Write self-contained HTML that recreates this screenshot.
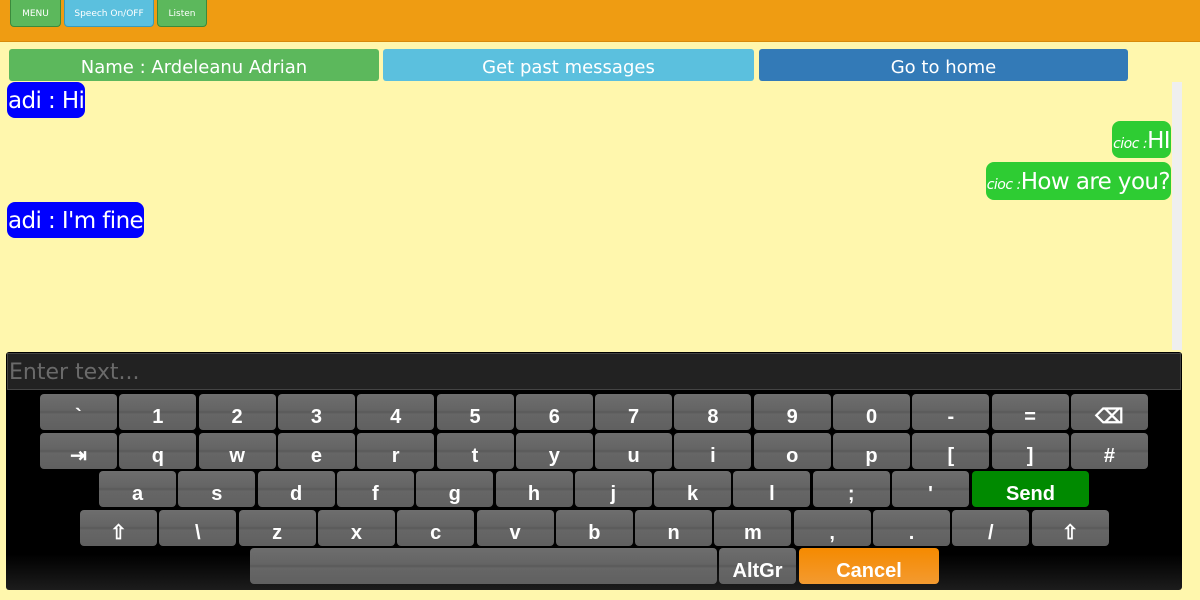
<!DOCTYPE html>
<html><head><meta charset="utf-8"><style>
*{box-sizing:border-box;margin:0;padding:0}
body{width:1200px;height:600px;background:#fff7ad;font-family:"DejaVu Sans","Liberation Sans",sans-serif;position:relative;overflow:hidden}
.a{position:absolute}
#hdr{left:0;top:0;width:1200px;height:42px;background:#ef9c12;border-bottom:1px solid #d88a0a}
.tb{top:0;height:27px;border-radius:0 0 4px 4px;color:#fff;font-size:9px;display:flex;align-items:center;justify-content:center;border:1px solid #3c8a3c;border-top:none;padding-top:1px}
.bb{top:49px;height:32px;color:#fff;font-size:18px;display:flex;align-items:center;justify-content:center;border-radius:3px;padding-top:4px}
.bub{color:#fff;font-size:23px;letter-spacing:-0.6px;border-radius:8px;padding:0 1px;display:flex;align-items:center;white-space:nowrap;padding-top:2px}
.bub i{font-size:14px;margin-top:6px;letter-spacing:-0.5px}
#kb{left:6px;top:352px;width:1176px;height:238px;background:linear-gradient(#000 85%,#1c1c1c 100%);border-radius:3px}
#inp{left:7px;top:353px;width:1174px;height:37px;background:#222;color:#6a6a6a;font-size:22px;padding-left:1px;line-height:38px;border:1px solid #444}
.k{height:36px;border-radius:4px;background:linear-gradient(#6e6e6e 0%,#646464 45%,#595959 50%,#666 56%,#606060 100%);color:#fff;font-family:"Liberation Sans",sans-serif;font-weight:bold;font-size:20px;display:flex;align-items:flex-end;justify-content:center;padding-bottom:1px}
</style></head><body>
<div id="hdr" class="a"></div>
<div class="a tb" style="left:10px;width:51px;background:#5cb85c">MENU</div>
<div class="a tb" style="left:64px;width:90px;background:#5bc0de;border-color:#3a9ab8">Speech On/OFF</div>
<div class="a tb" style="left:157px;width:50px;background:#5cb85c">Listen</div>
<div class="a bb" style="left:9px;width:370px;background:#5cb85c">Name : Ardeleanu Adrian</div>
<div class="a bb" style="left:383px;width:371px;background:#5bc0de">Get past messages</div>
<div class="a bb" style="left:759px;width:369px;background:#337ab7">Go to home</div>
<div class="a" style="left:1172px;top:82px;width:10px;height:268px;background:#efefef"></div>
<div class="a bub" style="left:7px;top:82px;height:36px;background:#0000ff">adi : Hi</div>
<div class="a bub" style="right:29px;top:121px;height:37px;background:#2ecc33"><i>cioc :</i>HI</div>
<div class="a bub" style="right:29px;top:162px;height:38px;background:#2ecc33"><i>cioc :</i>How are you?</div>
<div class="a bub" style="left:7px;top:202px;height:36px;background:#0000ff">adi : I'm fine</div>
<div id="kb" class="a"></div>
<div id="inp" class="a">Enter text...</div>
<div id="keys"></div>
<script>
var rows=[
[394,40,["`","1","2","3","4","5","6","7","8","9","0","-","=","⌫"]],
[433,40,["⇥","q","w","e","r","t","y","u","i","o","p","[","]","#"]],
[471,99,["a","s","d","f","g","h","j","k","l",";","'"]],
[510,80,["⇧","\\","z","x","c","v","b","n","m",",",".","/","⇧"]]];
var h="";
rows.forEach(function(r){r[2].forEach(function(t,i){h+='<div class="a k" style="left:'+(r[1]+i*79.3)+'px;top:'+r[0]+'px;width:77px">'+t+'</div>';});});
h+='<div class="a k" style="left:972px;top:471px;width:117px;background:#008a00">Send</div>';
h+='<div class="a k" style="left:250px;top:548px;width:467px"></div>';
h+='<div class="a k" style="left:719px;top:548px;width:77px">AltGr</div>';
h+='<div class="a k" style="left:799px;top:548px;width:140px;background:linear-gradient(#f58a00,#f39a30)">Cancel</div>';
document.getElementById("keys").innerHTML=h;
</script>
</body></html>
